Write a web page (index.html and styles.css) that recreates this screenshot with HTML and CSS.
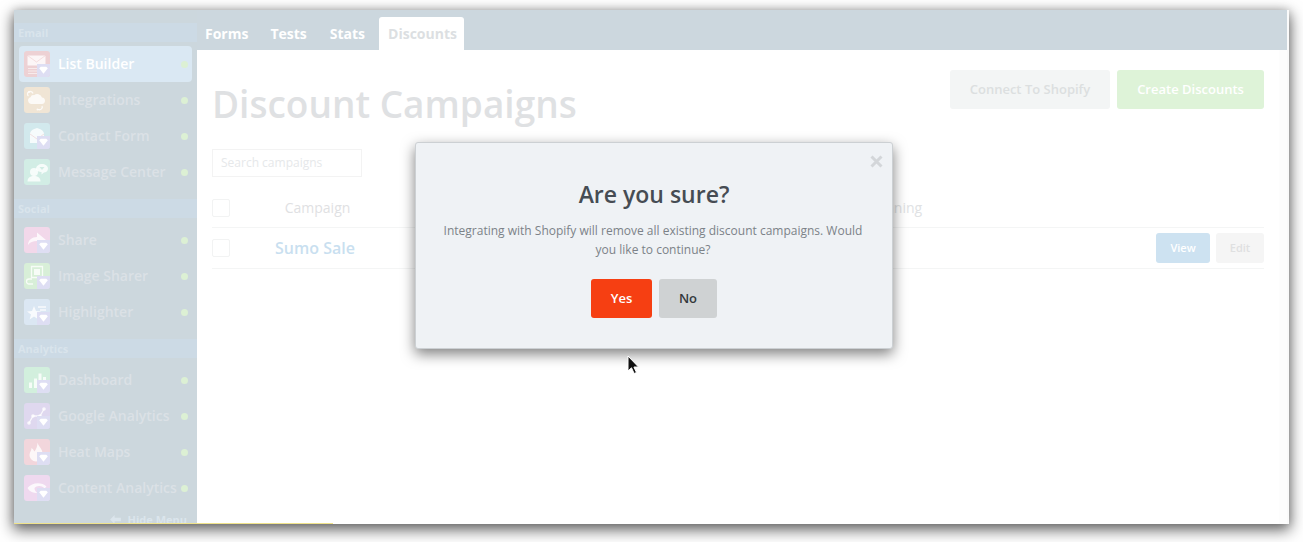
FILE: index.html
```html
<!DOCTYPE html>
<html lang="en">
<head>
<meta charset="utf-8">
<title>Discount Campaigns</title>
<link rel="stylesheet" href="styles.css">
</head>
<body>
<div class="window">
  <aside class="sidebar">
    <div class="section first">Email</div>
    <div class="item active"><span class="ico c-red"><svg viewBox="0 0 26 26"><path class="w" d="M3.500 4.500h18v10h-18z"/><path class="d" d="M3.500 4.500l9 6.500 9-6.500"/><path class="l2" d="M4 17.500h9M4 20h9M4 22.500h9"/></svg><i class="tag"><svg viewBox="0 0 12 12"><path class="t" d="M2 4l1.500-1.500h5L10 4 6 9z"/></svg></i></span><span class="name">List Builder</span><b class="dot"></b></div>
    <div class="item"><span class="ico c-orange"><svg viewBox="0 0 26 26"><path class="w" d="M7 17a3.500 3.500 0 0 1-.5-6.800 3 3 0 0 1 3.500-2 5 5 0 0 1 8 2.300 3.300 3.300 0 0 1 3 3.300 3.300 3.300 0 0 1-3 3.200z"/><path class="l" d="M9 6.500a3 3 0 0 0-4.500-1.500 2.500 2.500 0 0 0 0 4M18 19c1 2-1 4.500-4 3.500"/><circle class="w" cx="5" cy="5" r="1"/><circle class="w" cx="13.500" cy="22.500" r="1"/></svg></span><span class="name">Integrations</span><b class="dot"></b></div>
    <div class="item"><span class="ico c-cyan"><svg viewBox="0 0 26 26"><path class="w" d="M6 11c0-3 3-5 7-6 4 1 7 3 7 6v9H6z"/><path class="d" d="M6 11l7 5 7-5"/></svg><i class="tag"><svg viewBox="0 0 12 12"><path class="t" d="M2 4l1.500-1.500h5L10 4 6 9z"/></svg></i></span><span class="name">Contact Form</span><b class="dot"></b></div>
    <div class="item"><span class="ico c-teal"><svg viewBox="0 0 26 26"><circle class="w" cx="10" cy="13" r="4"/><path class="w" d="M3.500 22.500c0-4 3-5.500 6.500-5.500s6.500 1.500 6.500 5.500z"/><path class="w" d="M12 10c0-3 3-5 6-5s6 2 6 4.500-2 4-4 4l-2.500 2V13c-2 0-5.500-1-5.500-3z"/><path class="cut" d="M15.500 8h5l-2.500 3z"/></svg></span><span class="name">Message Center</span><b class="dot"></b></div>
    <div class="section">Social</div>
    <div class="item"><span class="ico c-pink"><svg viewBox="0 0 26 26"><path class="w" d="M4 18c0-5 4-8 9-8V5.500l9 7.500-5 3-4-2c-4 0-7 1-9 4z"/></svg><i class="tag"><svg viewBox="0 0 12 12"><path class="t" d="M2 4l1.500-1.500h5L10 4 6 9z"/></svg></i></span><span class="name">Share</span><b class="dot"></b></div>
    <div class="item"><span class="ico c-green"><svg viewBox="0 0 26 26"><path class="l" d="M7.500 3.500h11v11h-11z"/><path class="w" d="M10 6h6v6h-6z"/><path class="l" d="M8 16H5a2.500 2.500 0 0 0 0 5h4"/></svg><i class="tag"><svg viewBox="0 0 12 12"><path class="t" d="M2 4l1.500-1.500h5L10 4 6 9z"/></svg></i></span><span class="name">Image Sharer</span><b class="dot"></b></div>
    <div class="item"><span class="ico c-blue"><svg viewBox="0 0 26 26"><path class="w" d="M10 7l2 5 5 .4-4 3 1.400 5-4.400-2.800L5.600 20.400 7 15.400l-4-3 5-.4z"/><path class="l" d="M14 8h8M16 11h6"/></svg><i class="tag"><svg viewBox="0 0 12 12"><path class="t" d="M2 4l1.500-1.500h5L10 4 6 9z"/></svg></i></span><span class="name">Highlighter</span><b class="dot"></b></div>
    <div class="section">Analytics</div>
    <div class="item"><span class="ico c-mint"><svg viewBox="0 0 26 26"><path class="w" d="M5 15.500h3v5.500H5zM10 11.500h3V21h-3zM14.500 6.500h3V21h-3zM19 10h3v11h-3z"/></svg><i class="tag"><svg viewBox="0 0 12 12"><path class="t" d="M2 4l1.500-1.500h5L10 4 6 9z"/></svg></i></span><span class="name">Dashboard</span><b class="dot"></b></div>
    <div class="item"><span class="ico c-purple"><svg viewBox="0 0 26 26"><path class="l" d="M5 20l4-7 7 0 4-7"/><circle class="w" cx="5" cy="20" r="1.800"/><circle class="w" cx="9" cy="13" r="1.800"/><circle class="w" cx="16" cy="13" r="1.800"/><circle class="w" cx="20" cy="6" r="1.800"/></svg><i class="tag"><svg viewBox="0 0 12 12"><path class="t" d="M2 4l1.500-1.500h5L10 4 6 9z"/></svg></i></span><span class="name">Google Analytics</span><b class="dot"></b></div>
    <div class="item"><span class="ico c-rose"><svg viewBox="0 0 26 26"><path class="w" d="M13.500 3.500c1 4 5 6 5 11 0 5-3 8-6.500 8S5.500 19 5.500 16c0-3 2-4 2-7 2 1 2.500 3 3 3.500 1.500-2 3-5 3-9z"/></svg><i class="tag"><svg viewBox="0 0 12 12"><path class="t" d="M2 4l1.500-1.500h5L10 4 6 9z"/></svg></i></span><span class="name">Heat Maps</span><b class="dot"></b></div>
    <div class="item"><span class="ico c-orchid"><svg viewBox="0 0 26 26"><path class="w" d="M3.500 13c4-5.500 14-6.500 19-1.500l-2 2c-3-3.500-8-3-10-.5 0 2.500 1.500 4 3 5-4 0-8-1-10-5z"/></svg><i class="tag"><svg viewBox="0 0 12 12"><path class="t" d="M2 4l1.500-1.500h5L10 4 6 9z"/></svg></i></span><span class="name">Content Analytics</span><b class="dot"></b></div>
    <div class="hide"><svg class="arrow" viewBox="0 0 12 10"><path d="M0 5l5-5v3h7v4H5v3z"/></svg>Hide Menu</div>
  </aside>
  <main class="content">
    <nav class="tabs">
      <span class="tab">Forms</span>
      <span class="tab">Tests</span>
      <span class="tab">Stats</span>
      <span class="tab current">Discounts</span>
    </nav>
    <div class="page">
      <div class="head">
        <h1>Discount Campaigns</h1>
        <div class="actions">
          <span class="btn grey">Connect To Shopify</span>
          <span class="btn green">Create Discounts</span>
        </div>
      </div>
      <div class="search">Search campaigns</div>
      <div class="row header">
        <span class="check"></span>
        <span class="col-name">Campaign</span>
        <span class="col-status">Running</span>
      </div>
      <div class="row body">
        <span class="check"></span>
        <span class="col-name link">Sumo Sale</span>
        <span class="row-actions"><span class="mini blue">View</span><span class="mini pale">Edit</span></span>
      </div>
    </div>
  </main>
  <div class="edge"></div>
  <div class="modal">
    <svg class="close" viewBox="0 0 13 13"><path d="M1.500 1.500l10 10M11.500 1.500l-10 10"/></svg>
    <h2>Are you sure?</h2>
    <p>Integrating with Shopify will remove all existing discount campaigns. Would you like to continue?</p>
    <div class="choices"><span class="choice yes">Yes</span><span class="choice no">No</span></div>
  </div>
  <svg class="cursor" viewBox="0 0 12 20"><path d="M1 1v15l3.500-3.200 2.600 5.700 2.400-1-2.600-5.500h4.600z"/></svg>
</div>
</body>
</html>
```
FILE: styles.css
```css
* { box-sizing: border-box; }
html, body { margin: 0; height: 100%; background: #fff; overflow: hidden; }
body { padding: 10px 14px 18px; font-family: "Open Sans", "Noto Sans", sans-serif; }
.window {
  position: relative;
  width: 1275px;
  height: 514px;
  display: flex;
  background: #fff;
  box-shadow: 0 5px 14px 1px rgba(0,0,0,.6), 0 0 8px rgba(0,0,0,.15);
}
.sidebar {
  width: 183px;
  flex: none;
  background: #ccd7dd;
  padding-top: 13px;
  overflow: hidden;
  display: flex;
  flex-direction: column;
}
.section {
  height: 19px;
  flex: none;
  margin-top: 9px;
  padding-left: 4px;
  background: #ccdae5;
  color: #d9e4ec;
  font-size: 11px;
  font-weight: 700;
  line-height: 20px;
}
.section.first { margin-top: 0; }
.item {
  height: 36px;
  margin: 0 5px;
  padding: 0 5px;
  flex: none;
  display: flex;
  align-items: center;
  border-radius: 4px;
  color: #dbe1e6;
  font-size: 14px;
  font-weight: 600;
  position: relative;
}
.section + .item { margin-top: 4px; }
.item.active { background: #dae8f3; color: #fff; }
.ico {
  position: relative;
  width: 26px;
  height: 26px;
  border-radius: 3px;
  flex: none;
  margin-right: 8px;
  display: block;
}
.ico > svg { display: block; width: 26px; height: 26px; }
.w { fill: #fff; opacity: .8; }
.cut { fill: #d2ede5; }
.d { fill: none; stroke: #e8b8bc; stroke-width: .8; opacity: .5; }
.l { fill: none; stroke: #fff; stroke-width: 1.300; opacity: .8; }
.l2 { fill: none; stroke: #fff; stroke-width: .8; opacity: .7; }
.t { fill: #fff; }
.tag {
  position: absolute;
  right: 0;
  bottom: 0;
  width: 13px;
  height: 13px;
  background: #dedef3;
  border-radius: 0 0 3px 0;
  display: block;
}
.tag svg { display: block; width: 13px; height: 13px; }
.c-red { background: #edd1d4; }
.c-orange { background: #f0e5d5; }
.c-cyan { background: #d2e9ed; }
.c-teal { background: #d2ede5; }
.c-pink { background: #f2d8ea; }
.c-green { background: #d8efd8; }
.c-mint { background: #d2efdd; }
.c-blue { background: #dbe7f3; }
.c-purple { background: #dfd8ef; }
.c-rose { background: #f2d6dc; }
.c-orchid { background: #efd9ef; }
.name { white-space: nowrap; padding-bottom: 2px; }
.dot {
  position: absolute;
  right: 4px;
  top: 50%;
  width: 7px;
  height: 7px;
  margin-top: -3.500px;
  border-radius: 50%;
  background: #dcf0d4;
}
.hide {
  margin-top: 7px;
  flex: none;
  text-align: right;
  padding-right: 10px;
  color: #dbe5ec;
  font-size: 11px;
  font-weight: 700;
  line-height: 14px;
  white-space: nowrap;
}
.arrow { width: 11px; height: 9px; fill: #dbe5ec; margin-right: 7px; }
.edge {
  position: absolute;
  left: 0;
  bottom: 0;
  width: 319px;
  height: 1px;
  background: #efe28a;
}
.content { flex: 1; min-width: 0; display: flex; flex-direction: column; border-right: 2px solid #fafafa; }
.tabs {
  height: 40px;
  flex: none;
  background: #ccd7de;
  display: flex;
  align-items: flex-end;
  padding-left: 8px;
}
.tab {
  height: 33px;
  line-height: 34px;
  color: #fff;
  font-size: 14px;
  font-weight: 700;
  margin-right: 23px;
  white-space: nowrap;
}
.tab:first-child { margin-right: 22px; }
.tab:nth-child(3) { margin-right: 14px; }
.tab.current {
  background: #fff;
  color: #dcdfe2;
  padding: 0 9px;
  border-radius: 3px 3px 0 0;
  margin-right: 0;
  width: 85px;
}
.page { flex: 1; padding: 20px 15px 0 15px; border-right: 8px solid #fdfdfd; }
.head { display: flex; justify-content: space-between; align-items: flex-start; height: 79px; }
h1 {
  margin: 11px 0 0;
  font-size: 37px;
  font-weight: 600;
  line-height: 46px;
  color: #dfe1e3;
  white-space: nowrap;
}
.actions { display: flex; gap: 7px; }
.btn {
  height: 39px;
  line-height: 39px;
  border-radius: 3px;
  font-size: 13px;
  font-weight: 600;
  text-align: center;
  white-space: nowrap;
}
.grey { width: 160px; background: #f3f5f5; color: #dcdfe0; }
.green { width: 147px; background: #def3d8; color: #fff; }
.search {
  width: 150px;
  height: 28px;
  border: 1px solid #f3f3f3;
  color: #e6e8ea;
  font-size: 12px;
  line-height: 26px;
  padding-left: 8px;
}
.row { position: relative; display: flex; align-items: center; border-bottom: 1px solid #f4f5f5; }
.row.header { height: 51px; padding-top: 11px; }
.row.body { height: 41px; }
.check { width: 18px; height: 18px; border: 1px solid #f2f3f3; border-radius: 2px; flex: none; }
.col-name { width: 163px; text-align: center; color: #dfe1e3; font-size: 14px; padding-left: 12px; white-space: nowrap; }
.col-status { margin-left: 475px; color: #e0e2e4; font-size: 14px; }
.link { color: #c9dff0; font-size: 16px; font-weight: 600; padding-left: 7px; }
.row-actions { margin-left: auto; display: flex; gap: 6px; }
.mini { height: 30px; line-height: 29px; border-radius: 3px; font-size: 11px; font-weight: 600; text-align: center; }
.blue { width: 54px; background: #cde2f1; color: #fff; }
.pale { width: 48px; background: #f5f5f5; color: #dfe0e1; }
.modal {
  position: absolute;
  left: 401px;
  top: 132px;
  width: 478px;
  height: 207px;
  background: #eff2f5;
  border: 1px solid #ccd0d3;
  border-radius: 3px;
  box-shadow: 0 5px 14px rgba(0,0,0,.5);
  text-align: center;
  padding: 35px 20px 0;
}
.close {
  position: absolute;
  right: 9px;
  top: 12px;
  width: 13px;
  height: 13px;
  fill: none;
  stroke: #d3d6d9;
  stroke-width: 3;
}
h2 { margin: 0; font-size: 23px; line-height: 32px; font-weight: 600; color: #464c53; }
.modal p { margin: 11px 2px 0 0; font-size: 12px; line-height: 19px; color: #7c8288; }
.choices { display: flex; justify-content: center; gap: 7px; margin-top: 20px; }
.choice { height: 39px; line-height: 38px; border-radius: 3px; font-size: 13px; font-weight: 600; }
.yes { width: 61px; background: #f63f12; color: #fff; }
.no { width: 58px; background: #cfd2d3; color: #33383c; }
.cursor {
  position: absolute;
  left: 613px;
  top: 345px;
  width: 12px;
  height: 20px;
  fill: #111;
  stroke: #fff;
  stroke-width: 1;
}
```
